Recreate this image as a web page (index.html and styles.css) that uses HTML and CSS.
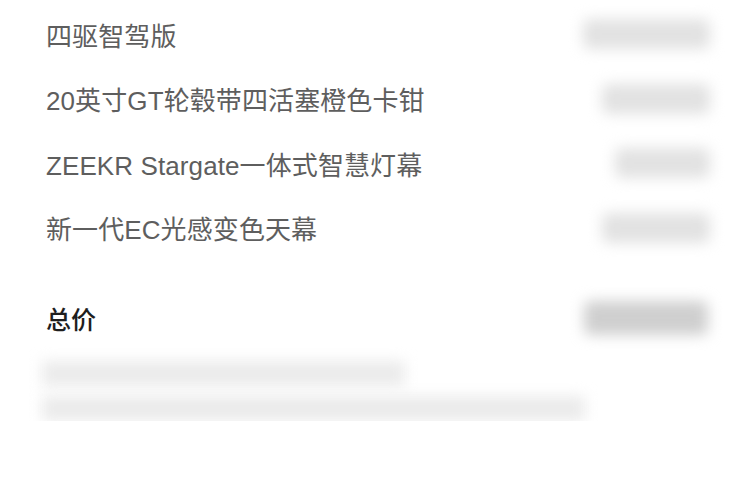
FILE: index.html
```html
<!DOCTYPE html>
<html lang="zh-CN">
  <head>
    <meta charset="UTF-8" />
    <meta name="viewport" content="width=device-width, initial-scale=1.0" />
    <title>配置清单</title>
    <link rel="stylesheet" href="styles.css">
  </head>
  <body>
    <div class="config-list">
      <div class="config-row">
        <span class="config-name">四驱智驾版</span>
        <span class="price-mask price-mask--w1"></span>
      </div>
      <div class="config-row">
        <span class="config-name">20英寸GT轮毂带四活塞橙色卡钳</span>
        <span class="price-mask price-mask--w2"></span>
      </div>
      <div class="config-row">
        <span class="config-name">ZEEKR Stargate一体式智慧灯幕</span>
        <span class="price-mask price-mask--w3"></span>
      </div>
      <div class="config-row">
        <span class="config-name">新一代EC光感变色天幕</span>
        <span class="price-mask price-mask--w2"></span>
      </div>

      <div class="config-row total-row">
        <span class="total-label">总价</span>
        <span class="price-mask price-mask--total"></span>
      </div>

      <!-- blurred footnote -->
      <div class="note">
        <div class="note-line note-line--short"></div>
        <div class="note-line note-line--long"></div>
      </div>
    </div>
  </body>
</html>
```

FILE: styles.css
```css
:root {
  --text: #5e5e5e;
  --text-strong: #1e1e1e;
  --mask: #e2e2e2;
  --mask-dark: #cfcfcf;
  --note: #ebebeb;
}

body {
  margin: 0;
  background-color: #fff;
  font-family: "Liberation Sans", "Noto Sans CJK SC", sans-serif;
}

.config-list {
  padding: 2px 40px 0 46px;
}

.config-row {
  display: flex;
  align-items: center;
  justify-content: space-between;
  height: 64.5px;
}

.config-name {
  font-size: 26px;
  letter-spacing: 0.1px;
  color: var(--text);
}

.price-mask {
  height: 30px;
  background-color: var(--mask);
  border-radius: 6px;
  filter: blur(7px);
}

.price-mask--w1 {
  width: 127px;
}

.price-mask--w2 {
  width: 108px;
}

.price-mask--w3 {
  width: 95px;
}

.total-row {
  margin-top: 26px;
}

.total-label {
  font-family: "Noto Sans CJK SC", sans-serif;
  font-size: 25px;
  font-weight: 500;
  color: var(--text-strong);
}

.price-mask--total {
  width: 124px;
  height: 34px;
  margin-right: 2px;
  background-color: var(--mask-dark);
}

.note {
  display: flex;
  flex-direction: column;
  gap: 10px;
  margin-top: 10px;
  margin-left: -4px;
}

.note-line {
  height: 25px;
  background-color: var(--note);
  filter: blur(7px);
}

.note-line--short {
  width: 363px;
}

.note-line--long {
  width: 543px;
}
```
